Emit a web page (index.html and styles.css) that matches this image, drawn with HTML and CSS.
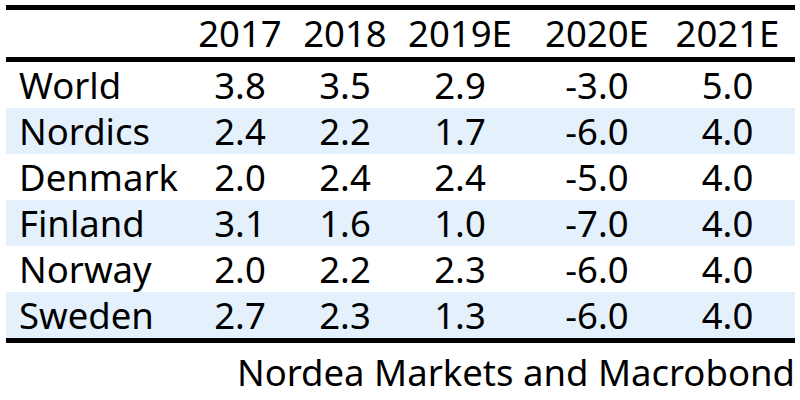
FILE: index.html
```html
<!DOCTYPE html>
<html lang="en">
<head>
<meta charset="utf-8">
<title>GDP growth</title>
<link rel="stylesheet" href="styles.css">
</head>
<body>
<div class="wrap">
  <table class="gdp">
    <colgroup>
      <col class="c-label">
      <col class="c1">
      <col class="c2">
      <col class="c3">
      <col class="c4">
      <col class="c5">
    </colgroup>
    <thead>
      <tr>
        <th class="label"></th>
        <th>2017</th>
        <th>2018</th>
        <th>2019E</th>
        <th>2020E</th>
        <th class="last">2021E</th>
      </tr>
    </thead>
    <tbody>
      <tr><td class="label">World</td><td>3.8</td><td>3.5</td><td>2.9</td><td>-3.0</td><td class="last">5.0</td></tr>
      <tr class="band"><td class="label">Nordics</td><td>2.4</td><td>2.2</td><td>1.7</td><td>-6.0</td><td class="last">4.0</td></tr>
      <tr><td class="label">Denmark</td><td>2.0</td><td>2.4</td><td>2.4</td><td>-5.0</td><td class="last">4.0</td></tr>
      <tr class="band"><td class="label">Finland</td><td>3.1</td><td>1.6</td><td>1.0</td><td>-7.0</td><td class="last">4.0</td></tr>
      <tr><td class="label">Norway</td><td>2.0</td><td>2.2</td><td>2.3</td><td>-6.0</td><td class="last">4.0</td></tr>
      <tr class="band"><td class="label">Sweden</td><td>2.7</td><td>2.3</td><td>1.3</td><td>-6.0</td><td class="last">4.0</td></tr>
    </tbody>
  </table>
  <div class="source">Nordea Markets and Macrobond</div>
</div>
</body>
</html>
```

FILE: styles.css
```css
html, body {
  margin: 0;
  padding: 0;
  background: #ffffff;
}

body {
  font-family: "Noto Sans", "Open Sans", sans-serif;
  color: #000000;
}

.wrap {
  width: 789px;
  padding: 5px 0 0 6px;
}

.gdp {
  width: 789px;
  border-collapse: separate;
  border-spacing: 0;
  table-layout: fixed;
  border-top: 5px solid #000;
  border-bottom: 5px solid #000;
  font-size: 36.5px;
  line-height: 1;
}

.c-label { width: 184px; }
.c1 { width: 100px; }
.c2 { width: 110px; }
.c3 { width: 120px; }
.c4 { width: 154px; }
.c5 { width: 121px; }

.gdp th,
.gdp td {
  padding: 0;
  text-align: center;
  vertical-align: middle;
  font-weight: normal;
  white-space: nowrap;
}

.gdp thead th {
  height: 47px;
  border-bottom: 5px solid #000;
}

.gdp tbody td {
  height: 46px;
}

.gdp .label {
  text-align: left;
  padding-left: 13px;
}

.gdp .last {
  padding-right: 14px;
}

.gdp tr.band td {
  background: #e4f1fd;
}

.source {
  text-align: right;
  font-size: 36.5px;
  line-height: 1;
  padding-top: 11px;
}
```
